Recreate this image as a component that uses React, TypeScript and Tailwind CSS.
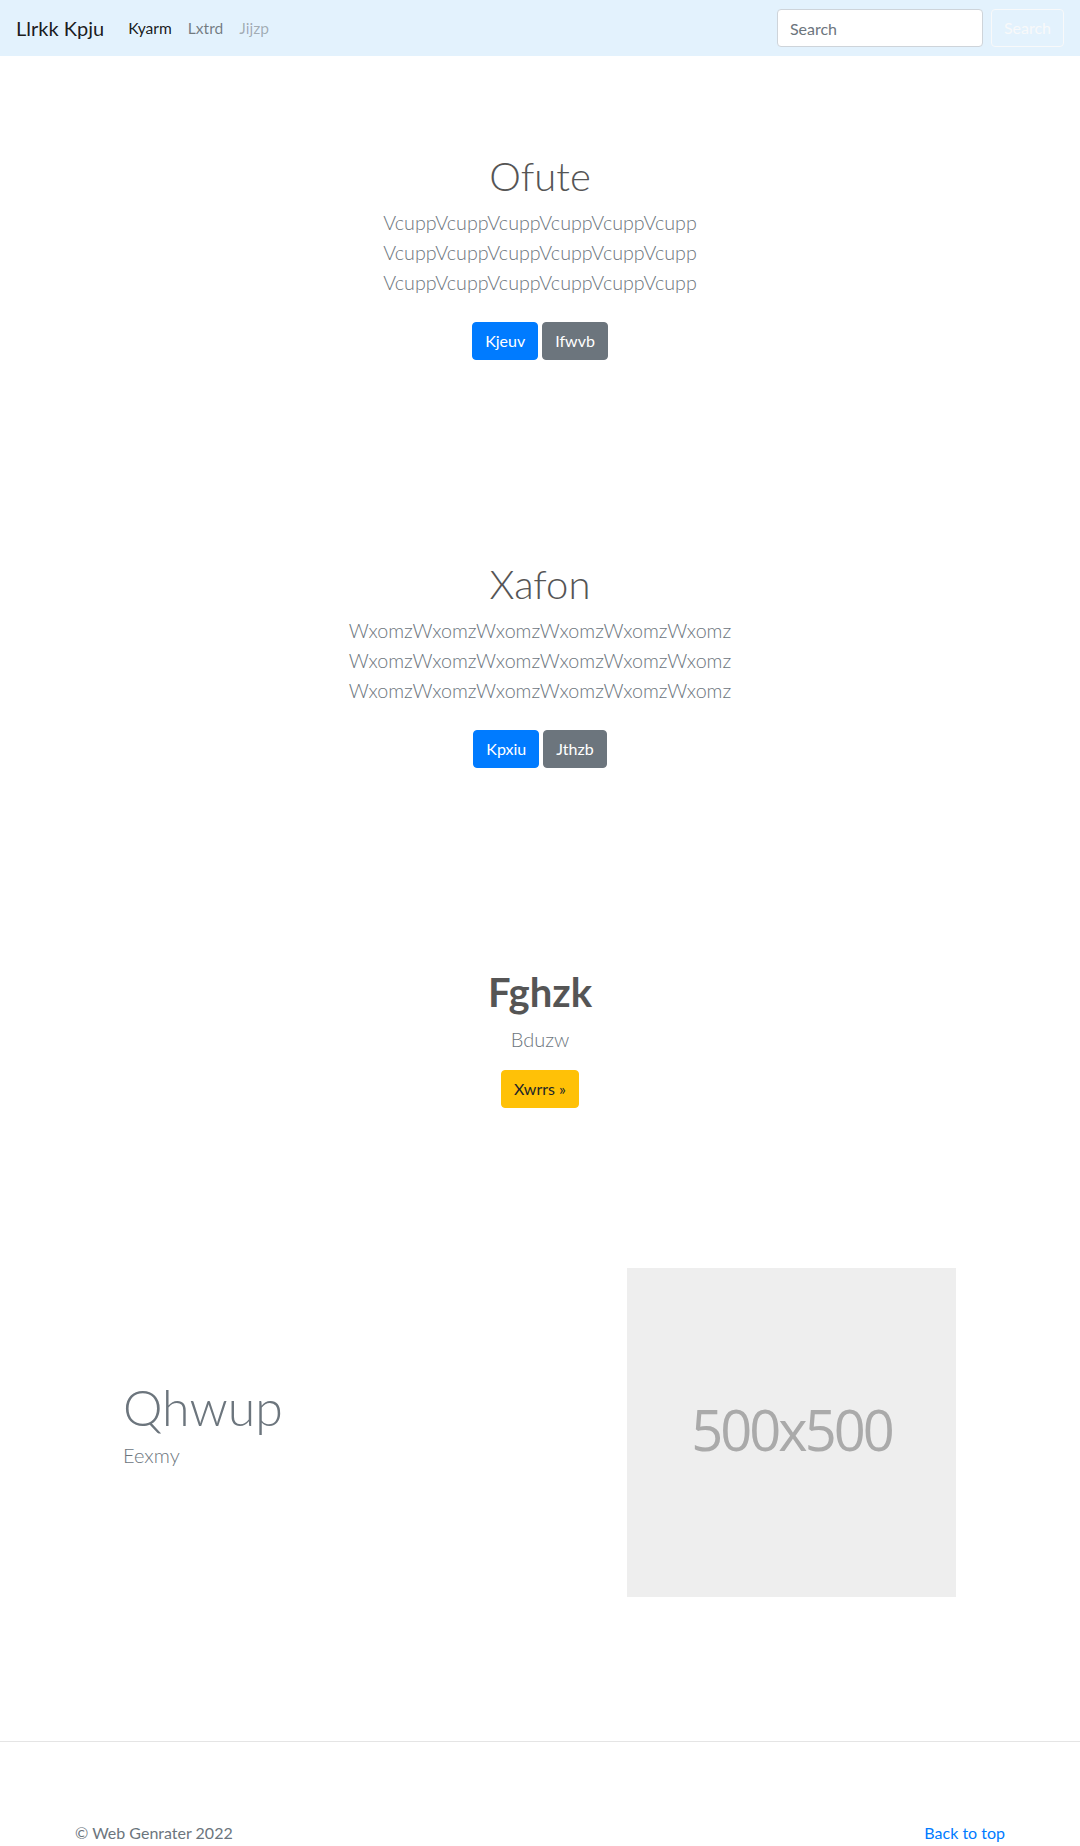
import React from "react";

function Hero({ title, word, b1, b2 }: { title: string; word: string; b1: string; b2: string }) {
  const line = word.repeat(6);
  return (
    <section className="py-24 text-center">
      <h1 className="mb-2 text-[40px] font-light leading-[48px] text-[#555]">{title}</h1>
      <p className="mb-4 text-[19.7px] font-light leading-[30px] text-[#6c757d]">
        {line}
        <br />
        {line}
        <br />
        {line}
      </p>
      <div className="flex justify-center gap-1 py-2">
        <a href="#" className="rounded border border-[#007bff] bg-[#007bff] px-3 py-[6px] text-base leading-6 text-white">
          {b1}
        </a>
        <a href="#" className="rounded border border-[#6c757d] bg-[#6c757d] px-3 py-[6px] text-base leading-6 text-white">
          {b2}
        </a>
      </div>
    </section>
  );
}

export default function App() {
  return (
    <div className="min-h-screen bg-white font-['Lato',sans-serif] text-[#212529]">
      <nav className="flex h-14 items-center bg-[#e3f2fd] px-4">
        <a href="#" className="mr-4 py-[5px] text-[20px] leading-[30px] text-black/90">
          Llrkk Kpju
        </a>
        <ul className="flex">
          <li>
            <a href="#" className="block px-2 py-2 text-[15.6px] leading-6 text-black/90">Kyarm</a>
          </li>
          <li>
            <a href="#" className="block px-2 py-2 text-[15.6px] leading-6 text-black/50">Lxtrd</a>
          </li>
          <li>
            <span className="block px-2 py-2 text-[15.6px] leading-6 text-black/30">Jijzp</span>
          </li>
        </ul>
        <form className="ml-auto flex items-center" onSubmit={(e) => e.preventDefault()}>
          <input
            type="search"
            placeholder="Search"
            className="h-[38px] w-[206px] rounded border border-[#ced4da] bg-white px-3 text-base text-[#495057] outline-none placeholder:text-[#6c757d]"
          />
          <button type="submit" className="ml-2 h-[38px] rounded border border-[#f8f9fa] px-3 text-base text-[#f8f9fa]">
            Search
          </button>
        </form>
      </nav>

      <Hero title="Ofute" word="Vcupp" b1="Kjeuv" b2="Ifwvb" />
      <Hero title="Xafon" word="Wxomz" b1="Kpxiu" b2="Jthzb" />

      <section className="py-24 text-center">
        <h1 className="mb-2 text-[40px] font-bold leading-[48px] text-[#555]">Fghzk</h1>
        <p className="mb-4 text-[20px] font-light leading-[30px] text-[#6c757d]">Bduzw</p>
        <div className="flex justify-center">
          <a href="#" className="rounded border border-[#ffc107] bg-[#ffc107] px-3 py-[6px] text-base leading-6 text-[#212529]">
            Xwrrs »
          </a>
        </div>
      </section>

      <section className="pb-[144px] pt-16">
        <div className="mx-auto flex w-[960px] items-center">
          <div className="flex-1 pb-[19px] pl-[63px]">
            <h1 className="mb-[3px] text-[50px] font-light leading-[60px] text-[#6c757d]">Qhwup</h1>
            <p className="text-[20px] font-light leading-[30px] text-[#6c757d]">Eexmy</p>
          </div>
          <div className="mr-[64px] flex h-[329px] w-[329px] items-center justify-center bg-[#eeeeee]">
            <span className="mb-[8px] font-['Open_Sans',sans-serif] text-[56px] leading-none tracking-[-3px] text-[#aaaaaa]">
              500x500
            </span>
          </div>
        </div>
      </section>

      <footer className="border-t border-[#e5e5e5] pb-12 pt-[79px]">
        <div className="mx-auto flex w-[930px] justify-between text-base leading-6">
          <p className="text-[#6c757d]">© Web Genrater 2022</p>
          <a href="#" className="text-[#007bff]">Back to top</a>
        </div>
      </footer>
    </div>
  );
}
